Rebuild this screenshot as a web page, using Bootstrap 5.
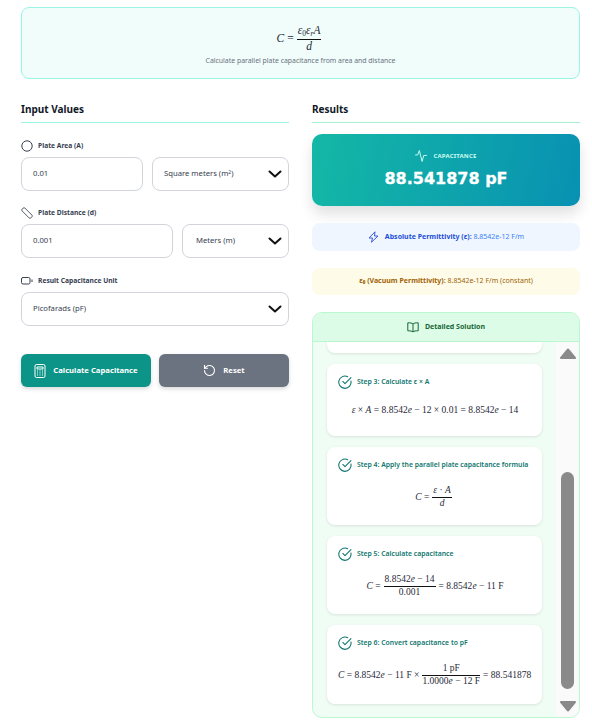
<!DOCTYPE html>
<html lang="en"><head><meta charset="utf-8"><title>Parallel Plate Capacitance</title>
<link href="https://cdn.jsdelivr.net/npm/bootstrap@5.3.0/dist/css/bootstrap.min.css" rel="stylesheet">
<style>
html,body{height:726px;overflow:hidden;background:#fff}
body{font-family:"Noto Sans","Liberation Sans",sans-serif;color:#374151}
.page-wrap{padding:7px 12px 0 21px}
.hero-box{height:72px;background:#f0fdfa;border:1px solid #99f6e4;border-radius:8px;padding-top:14px;text-align:center}
.hero-note{font-size:6.9px;color:#6b7280;margin-top:1px;line-height:10px}
.tex{font-family:"Liberation Serif",serif;color:#1f2937;white-space:nowrap}
.tex i{font-style:italic}
.tex sub{font-size:.65em}
.frac{display:inline-flex;flex-direction:column;text-align:center;vertical-align:middle;line-height:1.15;margin:0 3px}
.frac>span:first-child{border-bottom:1px solid #111;padding:0 1px 1px}
.hero-tex{font-size:11.5px;line-height:33px;height:33px;display:flex;justify-content:center;align-items:center}
.cols{display:grid;grid-template-columns:268px 268px;column-gap:23px;margin-top:22px}
.sec-title{font-size:10px;font-weight:700;color:#111827;line-height:16px;padding-bottom:5px;border-bottom:1px solid #99f6e4;margin:0}
.sec-title.green{border-color:#a7f3d0}
.field-label{font-size:6.7px;font-weight:700;color:#374151;line-height:12px;gap:5px;height:12px}
.f1{margin-top:17px}.f2{margin-top:16px}.f3{margin-top:17px}
.ctl-row{display:flex;gap:9px;margin-top:5px}
.ctl{height:34px;border:1px solid #d1d5db;border-radius:8px;font-size:7.7px;color:#374151;background:#fff;padding:0 11px;display:flex;align-items:center;justify-content:space-between}
.w-a{width:122px}.w-b{width:137px}.w-c{width:152px}.w-d{width:107px}
.w-b,.w-d,.w-e{padding-right:5px}
.w-e{width:100%}
.w-d{justify-content:flex-end;gap:32px;padding-left:0}
.ctl sup{font-size:5px}
.act-row{display:grid;grid-template-columns:130px 130px;gap:8px;margin-top:28px}
.act{height:33px;border-radius:6px;color:#fff;font-size:7.7px;font-weight:700;display:flex;align-items:center;justify-content:center;gap:7px;box-shadow:0 2px 4px rgba(0,0,0,.15)}
.act-a{background:#0d9488}.act-b{background:#6b7280}
.big-result{height:72px;margin-top:11px;border-radius:10px;background:linear-gradient(100deg,#14b8a6,#0891b2);color:#fff;box-shadow:0 8px 14px rgba(0,0,0,.12);text-align:center;padding-top:15px}
.big-cap{font-size:6px;font-weight:700;letter-spacing:.2px;color:#ccfbf1;gap:6px;height:14px}
.big-val{font-family:"DejaVu Sans",sans-serif;font-size:16px;font-weight:700;line-height:24px;margin-top:4px;-webkit-text-stroke:.3px #fff}
.info{border-radius:8px;font-size:7px;display:flex;align-items:center;justify-content:center;gap:6px}
.info-a{height:28px;margin-top:17px;background:#eff6ff;color:#3b82f6}
.info-a b{color:#1d4ed8}
.info-b{height:27px;margin-top:17px;background:#fefce8;color:#a16207}
.info-b b{color:#a16207}
.sol{height:406px;margin-top:17px;background:#f0fdf4;border:1px solid #bbf7d0;border-radius:10px;overflow:hidden;display:flex;flex-direction:column}
.sol-head{height:29px;flex:none;background:#dcfce7;border-bottom:1px solid #bbf7d0;font-size:7px;font-weight:700;color:#166534;gap:6px}
.sol-body{flex:1;display:flex;min-height:0}
.steps{flex:1;padding:0 14px;min-width:0}
.step{background:#fff;border-radius:8px;box-shadow:0 1px 3px rgba(0,0,0,.1);margin-bottom:11px;padding:0 10px 0 11px;overflow:hidden}
.step-stub{height:11px;border-radius:0 0 8px 8px}
.s3{height:72px}.s4{height:78px}.s5{height:78px}.s6{height:79px}
.step-head{font-size:6.85px;font-weight:600;color:#0f766e;gap:5px;height:14px;margin-top:11px;white-space:nowrap}
.step-tex{font-size:9.5px;display:flex;align-items:center;justify-content:center;overflow:hidden;height:30px;margin-top:10px}
.s3 .step-tex{margin-top:13px;height:16px}
.s6 .step-tex{justify-content:flex-start}
.sbar{width:23px;flex:none;background:#fafafa;display:flex;flex-direction:column;align-items:center}
.arr-a{margin-top:6px}
.thumb{width:13px;height:217px;margin-top:113px;background:#8a8a8a;border-radius:7px}
.arr-b{margin-top:12px}
svg{flex:none}
</style></head><body>
<div class="page-wrap">
  <div class="hero-box">
    <div class="tex hero-tex"><span><i>C</i> = </span><span class="frac"><span><i>ε</i><sub>0</sub><i>ε</i><sub><i>r</i></sub><i>A</i></span><span><i>d</i></span></span></div>
    <div class="hero-note">Calculate parallel plate capacitance from area and distance</div>
  </div>
  <div class="cols">
    <div>
      <h2 class="sec-title">Input Values</h2>
      <div class="f1 field-label d-flex align-items-center">
        <svg width="12" height="12" viewBox="0 0 12 12" fill="none" stroke="#374151"><circle cx="6" cy="6" r="5.2"/></svg><span>Plate Area (A)</span></div>
      <div class="ctl-row"><div class="ctl w-a">0.01</div>
        <div class="ctl w-b"><span>Square meters (m<sup>2</sup>)</span><svg width="16" height="16" viewBox="0 0 16 16" fill="none" stroke="#111" stroke-width="2" stroke-linecap="round" stroke-linejoin="round"><path d="M2.500 5.500 8 10.500l5.500-5"/></svg></div></div>
      <div class="f2 field-label d-flex align-items-center">
        <svg width="12" height="12" viewBox="0 0 12 12" fill="none" stroke="#4b5563" stroke-width=".9"><rect x="-.2" y="4" width="12.400" height="4" rx="1.200" transform="rotate(45 6 6)"/></svg><span>Plate Distance (d)</span></div>
      <div class="ctl-row"><div class="ctl w-c">0.001</div>
        <div class="ctl w-d"><span>Meters (m)</span><svg width="16" height="16" viewBox="0 0 16 16" fill="none" stroke="#111" stroke-width="2" stroke-linecap="round" stroke-linejoin="round"><path d="M2.500 5.500 8 10.500l5.500-5"/></svg></div></div>
      <div class="f3 field-label d-flex align-items-center">
        <svg width="12" height="12" viewBox="0 0 12 12" fill="none" stroke="#374151"><rect x=".5" y="2.500" width="8.500" height="6.500" rx="1.500"/><path d="M11 4.500v2.500"/></svg><span>Result Capacitance Unit</span></div>
      <div class="ctl-row"><div class="ctl w-e"><span>Picofarads (pF)</span><svg width="16" height="16" viewBox="0 0 16 16" fill="none" stroke="#111" stroke-width="2" stroke-linecap="round" stroke-linejoin="round"><path d="M2.500 5.500 8 10.500l5.500-5"/></svg></div></div>
      <div class="act-row">
        <div class="act act-a"><svg width="12" height="14" viewBox="0 0 12 14" fill="none" stroke="#fff"><rect x="1" y=".5" width="10" height="13" rx="1.500"/><path d="M3 3h6v2H3zM3 7h1M5.500 7h1M8 7h1M3 9h1M5.500 9h1M8 9h1M3 11h1M5.500 11h1M8 11h1"/></svg><span>Calculate Capacitance</span></div>
        <div class="act act-b"><svg width="13" height="13" viewBox="0 0 13 13" fill="none" stroke="#fff" stroke-width="1.100" stroke-linecap="round" stroke-linejoin="round"><path d="M1.500 6.500a5 5 0 1 0 1.600-3.700L1.500 4.300"/><path d="M1.500 1.300v3h3"/></svg><span>Reset</span></div>
      </div>
    </div>
    <div>
      <h2 class="sec-title green">Results</h2>
      <div class="big-result">
        <div class="big-cap d-flex align-items-center justify-content-center"><svg width="12" height="12" viewBox="0 0 11 11" fill="none" stroke="#ccfbf1" stroke-linecap="round" stroke-linejoin="round" stroke-width=".9"><path d="M.5 4.500h2L4 .5l2.500 10L8 5h2.500"/></svg><span>CAPACITANCE</span></div>
        <div class="big-val">88.541878 pF</div>
      </div>
      <div class="info info-a"><svg width="11" height="12" viewBox="0 0 11 12" fill="none" stroke="#3b5bdb" stroke-linejoin="round"><path d="M7 .8 1 7h3.500L3.500 11.200 10 5H6.500z"/></svg><span><b>Absolute Permittivity (ε):</b> 8.8542e-12 F/m</span></div>
      <div class="info info-b"><span><b>ε₀ (Vacuum Permittivity):</b> 8.8542e-12 F/m (constant)</span></div>
      <div class="sol">
        <div class="sol-head d-flex align-items-center justify-content-center"><svg width="12" height="11" viewBox="0 0 12 11" fill="none" stroke="#166534" stroke-linejoin="round"><path d="M6 2C5 1 3.500.8.800.8v8c2.700 0 4.200.2 5.200 1.200 1-1 2.500-1.200 5.200-1.200v-8C8.500.8 7 1 6 2zM6 2v8"/></svg><span>Detailed Solution</span></div>
        <div class="sol-body">
          <div class="steps">
            <div class="step step-stub"></div>
            <div class="step s3"><div class="step-head d-flex align-items-center"><svg width="14" height="14" viewBox="0 0 13 13" fill="none" stroke="#0f766e" stroke-linecap="round" stroke-linejoin="round"><path d="M12 5.500A5.700 5.700 0 1 1 9 1.600"/><path d="M4.500 6 6.500 8l5.500-5.500"/></svg><span>Step 3: Calculate ε × A</span></div>
              <div class="tex step-tex"><span><i>ε</i> × <i>A</i> = 8.8542<i>e</i> − 12 × 0.01 = 8.8542<i>e</i> − 14</span></div></div>
            <div class="step s4"><div class="step-head d-flex align-items-center"><svg width="14" height="14" viewBox="0 0 13 13" fill="none" stroke="#0f766e" stroke-linecap="round" stroke-linejoin="round"><path d="M12 5.500A5.700 5.700 0 1 1 9 1.600"/><path d="M4.500 6 6.500 8l5.500-5.500"/></svg><span>Step 4: Apply the parallel plate capacitance formula</span></div>
              <div class="tex step-tex"><span><i>C</i> =</span><span class="frac"><span><i>ε</i> · <i>A</i></span><span><i>d</i></span></span></div></div>
            <div class="step s5"><div class="step-head d-flex align-items-center"><svg width="14" height="14" viewBox="0 0 13 13" fill="none" stroke="#0f766e" stroke-linecap="round" stroke-linejoin="round"><path d="M12 5.500A5.700 5.700 0 1 1 9 1.600"/><path d="M4.500 6 6.500 8l5.500-5.500"/></svg><span>Step 5: Calculate capacitance</span></div>
              <div class="tex step-tex"><span><i>C</i> =</span><span class="frac"><span>8.8542<i>e</i> − 14</span><span>0.001</span></span><span>= 8.8542<i>e</i> − 11 F</span></div></div>
            <div class="step s6"><div class="step-head d-flex align-items-center"><svg width="14" height="14" viewBox="0 0 13 13" fill="none" stroke="#0f766e" stroke-linecap="round" stroke-linejoin="round"><path d="M12 5.500A5.700 5.700 0 1 1 9 1.600"/><path d="M4.500 6 6.500 8l5.500-5.500"/></svg><span>Step 6: Convert capacitance to pF</span></div>
              <div class="tex step-tex"><span><i>C</i> = 8.8542<i>e</i> − 11 F ×</span><span class="frac"><span>1 pF</span><span>1.0000<i>e</i> − 12 F</span></span><span>= 88.541878</span></div></div>
          </div>
          <div class="sbar">
            <svg class="arr-a" width="16" height="11" viewBox="0 0 16 11" fill="#8a8a8a" stroke="#8a8a8a" stroke-width="2" stroke-linejoin="round"><path d="M8 1.500 15 10H1z"/></svg>
            <div class="thumb"></div>
            <svg class="arr-b" width="16" height="11" viewBox="0 0 16 11" fill="#8a8a8a" stroke="#8a8a8a" stroke-width="2" stroke-linejoin="round"><path d="M1 1h14L8 9.500z"/></svg>
          </div>
        </div>
      </div>
    </div>
  </div>
</div>
<script src="https://cdn.jsdelivr.net/npm/bootstrap@5.3.0/dist/js/bootstrap.bundle.min.js"></script>
</body></html>
